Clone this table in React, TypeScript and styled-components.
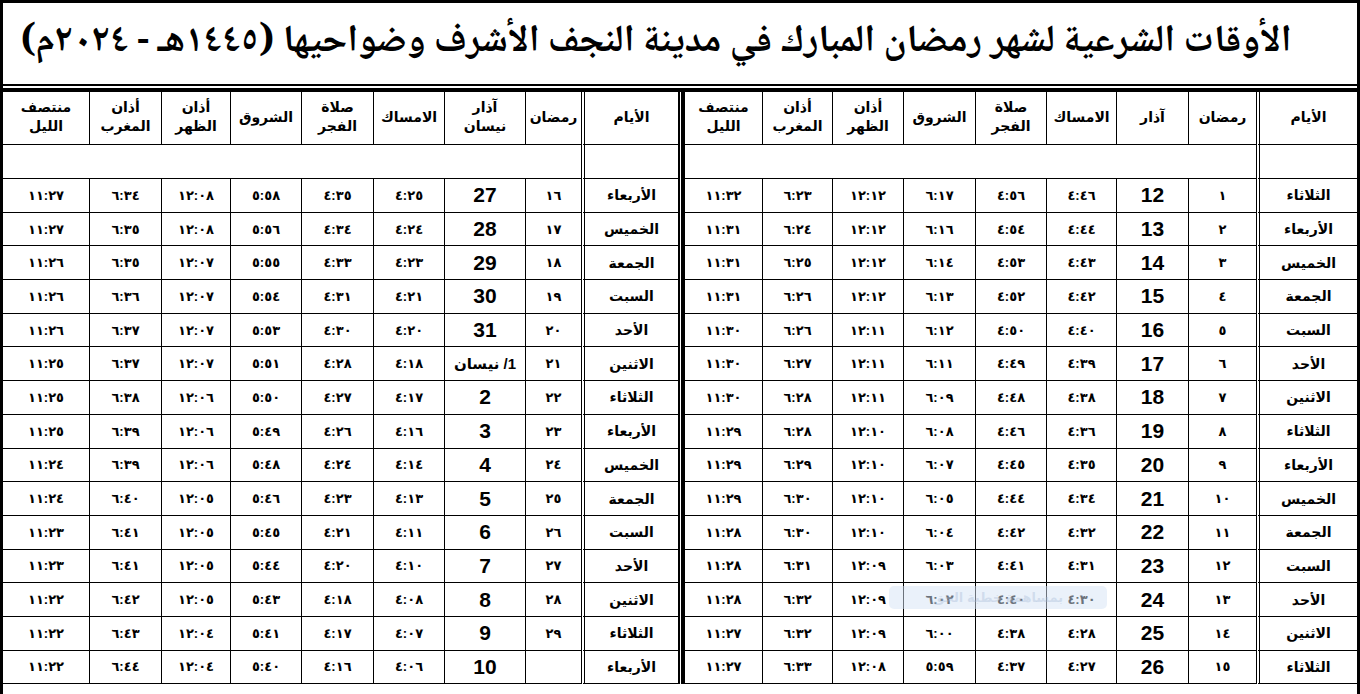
import React from 'react'
import styled, { createGlobalStyle } from 'styled-components'

const GlobalStyle = createGlobalStyle`
  html, body { margin: 0; padding: 0; background: #fff; overflow: hidden; }
  body { font-family: "Liberation Sans", "DejaVu Sans", sans-serif; color: #000; }
`

// arabic-indic digits for the hijri numbers and the times
const toAr = (s: string) => s.replace(/[0-9]/g, (d) => '٠١٢٣٤٥٦٧٨٩'[+d])

type Day = { name: string; ram: string; greg: string; times: string[] }

const mk = (rows: [string, string, string, string][]): Day[] =>
  rows.map(([name, ram, greg, t]) => ({ name, ram, greg, times: t.split(' ') }))

// times: imsak, fajr, sunrise, dhuhr, maghrib, midnight
const firstHalf = mk([
  ['الثلاثاء', '1', '12', '4:46 4:56 6:17 12:12 6:23 11:32'],
  ['الأربعاء', '2', '13', '4:44 4:54 6:16 12:12 6:24 11:31'],
  ['الخميس', '3', '14', '4:43 4:53 6:14 12:12 6:25 11:31'],
  ['الجمعة', '4', '15', '4:42 4:52 6:13 12:12 6:26 11:31'],
  ['السبت', '5', '16', '4:40 4:50 6:12 12:11 6:26 11:30'],
  ['الأحد', '6', '17', '4:39 4:49 6:11 12:11 6:27 11:30'],
  ['الاثنين', '7', '18', '4:38 4:48 6:09 12:11 6:28 11:30'],
  ['الثلاثاء', '8', '19', '4:36 4:46 6:08 12:10 6:28 11:29'],
  ['الأربعاء', '9', '20', '4:35 4:45 6:07 12:10 6:29 11:29'],
  ['الخميس', '10', '21', '4:34 4:44 6:05 12:10 6:30 11:29'],
  ['الجمعة', '11', '22', '4:32 4:42 6:04 12:10 6:30 11:28'],
  ['السبت', '12', '23', '4:31 4:41 6:03 12:09 6:31 11:28'],
  ['الأحد', '13', '24', '4:30 4:40 6:02 12:09 6:32 11:28'],
  ['الاثنين', '14', '25', '4:28 4:38 6:00 12:09 6:32 11:27'],
  ['الثلاثاء', '15', '26', '4:27 4:37 5:59 12:08 6:33 11:27'],
])

const secondHalf = mk([
  ['الأربعاء', '16', '27', '4:25 4:35 5:58 12:08 6:34 11:27'],
  ['الخميس', '17', '28', '4:24 4:34 5:56 12:08 6:35 11:27'],
  ['الجمعة', '18', '29', '4:23 4:33 5:55 12:07 6:35 11:26'],
  ['السبت', '19', '30', '4:21 4:31 5:54 12:07 6:36 11:26'],
  ['الأحد', '20', '31', '4:20 4:30 5:53 12:07 6:37 11:26'],
  ['الاثنين', '21', '1/ نيسان', '4:18 4:28 5:51 12:07 6:37 11:25'],
  ['الثلاثاء', '22', '2', '4:17 4:27 5:50 12:06 6:38 11:25'],
  ['الأربعاء', '23', '3', '4:16 4:26 5:49 12:06 6:39 11:25'],
  ['الخميس', '24', '4', '4:14 4:24 5:48 12:06 6:39 11:24'],
  ['الجمعة', '25', '5', '4:13 4:23 5:46 12:05 6:40 11:24'],
  ['السبت', '26', '6', '4:11 4:21 5:45 12:05 6:41 11:23'],
  ['الأحد', '27', '7', '4:10 4:20 5:44 12:05 6:41 11:23'],
  ['الاثنين', '28', '8', '4:08 4:18 5:43 12:05 6:42 11:22'],
  ['الثلاثاء', '29', '9', '4:07 4:17 5:41 12:04 6:43 11:22'],
  ['الأربعاء', '', '10', '4:06 4:16 5:40 12:04 6:44 11:22'],
])

const Frame = styled.div`
  box-sizing: border-box;
  width: 1360px;
  height: 694px;
  border: 3px solid #000;
  border-bottom: none;
  overflow: hidden;
`

const Title = styled.h1`
  box-sizing: border-box;
  margin: 0;
  height: 83px;
  border-bottom: 2px solid #000;
  direction: rtl;
  display: flex;
  align-items: center;
  justify-content: center;
  padding-right: 48px;
  padding-bottom: 2px;
  font-family: "Noto Naskh Arabic", "Noto Sans Arabic", "DejaVu Sans", sans-serif;
  font-weight: 700;
  font-size: 38px;
  white-space: nowrap;
`

const Sheet = styled.div`
  margin-top: 2px;
  border-top: 4px solid #000;
  display: flex;
  direction: ltr;
`

const Half = styled.div<{ $w: number }>`
  position: relative;
  width: ${(p) => p.$w}px;
  display: flex;
  flex-direction: column;
`

const Separator = styled.div`
  width: 1px;
  border-left: 2px solid #000;
  border-right: 4px solid #000;
`

const Row = styled.div<{ $cols: number[]; $h: number }>`
  direction: rtl;
  display: grid;
  grid-template-columns: ${(p) => p.$cols.map((c) => `${c}px`).join(' ')};
  height: ${(p) => p.$h}px;
`

const Cell = styled.div<{ $span?: number }>`
  box-sizing: border-box;
  display: flex;
  align-items: center;
  justify-content: center;
  text-align: center;
  border-bottom: 1px solid #000;
  border-left: 1px solid #000;
  font-weight: 700;
  ${(p) => (p.$span ? `grid-column: span ${p.$span};` : '')}
  &:first-child { border-left: 4px double #000; }
  &:last-child { border-left: none; }
`

const HeadCell = styled(Cell)`
  font-size: 14px;
  line-height: 19px;
  padding-bottom: 2px;
`

const DayCell = styled(Cell)`
  font-size: 14px;
`

const RamCell = styled(Cell)`
  font-size: 13px;
  letter-spacing: 1.5px;
`

const GregCell = styled(Cell)<{ $small?: boolean }>`
  font-size: ${(p) => (p.$small ? '15px' : '21px')};
`

const TimeCell = styled(Cell)`
  font-size: 13px;
  letter-spacing: 3px;
`

const Watermark = styled.div`
  position: absolute;
  left: 204px;
  top: 494px;
  width: 218px;
  height: 23px;
  border-radius: 5px;
  background: rgba(214, 228, 246, 0.5);
  color: rgba(160, 180, 210, 0.35);
  font-size: 13px;
  font-weight: 700;
  direction: rtl;
  display: flex;
  align-items: center;
  justify-content: center;
`

const heads = (second: boolean) => [
  ['الأيام'],
  ['رمضان'],
  second ? ['آذار', 'نيسان'] : ['آذار'],
  ['الامساك'],
  ['صلاة', 'الفجر'],
  ['الشروق'],
  ['أذان', 'الظهر'],
  ['أذان', 'المغرب'],
  ['منتصف', 'الليل'],
]

const Table: React.FC<{ days: Day[]; cols: number[]; second?: boolean; width: number }> = ({ days, cols, second, width }) => (
  <Half $w={width}>
    <Row $cols={cols} $h={53}>
      {heads(!!second).map((h, i) => (
        <HeadCell key={i}>
          {h.map((l, j) => (
            <React.Fragment key={j}>
              {j > 0 && <br />}
              {l}
            </React.Fragment>
          ))}
        </HeadCell>
      ))}
    </Row>
    <Row $cols={cols} $h={34}>
      <Cell />
      <Cell $span={8} />
    </Row>
    {days.map((d, i) => (
      <Row key={i} $cols={cols} $h={33.7}>
        <DayCell>{d.name}</DayCell>
        <RamCell>{toAr(d.ram)}</RamCell>
        <GregCell $small={d.greg.length > 3}>{d.greg}</GregCell>
        {d.times.map((t, j) => (
          <TimeCell key={j}>{toAr(t)}</TimeCell>
        ))}
      </Row>
    ))}
    {!second && <Watermark>بمساهمة خطبة الحق</Watermark>}
  </Half>
)

export default function App() {
  return (
    <>
      <GlobalStyle />
      <Frame>
        <Title>الأوقات الشرعية لشهر رمضان المبارك في مدينة النجف الأشرف وضواحيها (١٤٤٥هـ - ٢٠٢٤م)</Title>
        <Sheet>
          <Table second days={secondHalf} width={675} cols={[97, 56, 81, 71, 72, 71, 69, 72, 86]} />
          <Separator />
          <Table days={firstHalf} width={672} cols={[101, 68, 72, 70, 71, 72, 71, 70, 77]} />
        </Sheet>
      </Frame>
    </>
  )
}
